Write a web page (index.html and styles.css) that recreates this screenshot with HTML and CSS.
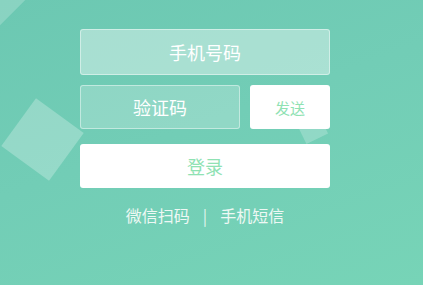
FILE: index.html
```html
<!DOCTYPE html>
<html lang="zh-CN">
<head>
<meta charset="utf-8">
<title>登录</title>
<link rel="stylesheet" href="styles.css">
</head>
<body>
<div class="stage">
  <div class="deco deco-corner"></div>
  <div class="deco deco-left"></div>
  <div class="deco deco-right"></div>
  <form class="login">
    <input class="field field-phone" type="text" placeholder="手机号码">
    <div class="code-row">
      <input class="field field-code" type="text" placeholder="验证码">
      <button type="button" class="btn btn-send">发送</button>
    </div>
    <button type="button" class="btn btn-login">登录</button>
    <div class="links">
      <a class="link">微信扫码</a>
      <span class="sep">|</span>
      <a class="link">手机短信</a>
    </div>
  </form>
</div>
</body>
</html>
```

FILE: styles.css
```css
html, body {
  margin: 0;
  padding: 0;
}
body {
  width: 423px;
  height: 285px;
  overflow: hidden;
  font-family: "Noto Sans CJK SC", "Noto Sans", sans-serif;
}
.stage {
  position: relative;
  width: 423px;
  height: 285px;
  overflow: hidden;
  background: linear-gradient(160deg, #6cc8b2 0%, #72cdb6 45%, #77d4b7 100%);
}
.deco {
  position: absolute;
  background: rgba(255, 255, 255, 0.26);
}
.deco-corner {
  width: 64px;
  height: 64px;
  left: -42px;
  top: -42px;
  transform: rotate(45deg);
  background: rgba(255, 255, 255, 0.2);
}
.deco-left {
  width: 59px;
  height: 59px;
  left: 13px;
  top: 110px;
  transform: rotate(36deg);
}
.deco-right {
  width: 24px;
  height: 24px;
  left: 300px;
  top: 116px;
  transform: rotate(-26deg);
  background: rgba(255, 255, 255, 0.22);
}
.login {
  position: relative;
  width: 250px;
  margin: 0 0 0 80px;
  padding-top: 29px;
  display: flex;
  flex-direction: column;
}
.field {
  box-sizing: border-box;
  border: 1px solid rgba(255, 255, 255, 0.45);
  border-radius: 3px;
  color: #fff;
  font-family: inherit;
  font-size: 18px;
  text-align: center;
  outline: none;
  padding: 0;
}
.field::placeholder {
  color: #fff;
  opacity: 1;
}
.field-phone {
  width: 250px;
  height: 46px;
  background: rgba(255, 255, 255, 0.4);
}
.code-row {
  display: flex;
  gap: 10px;
  margin-top: 10px;
}
.field-code {
  width: 160px;
  height: 44px;
  background: rgba(255, 255, 255, 0.22);
}
.btn {
  box-sizing: border-box;
  border: none;
  border-radius: 3px;
  background: #fff;
  color: #8fe2b3;
  font-family: inherit;
  padding: 0;
  cursor: pointer;
}
.btn-send {
  width: 80px;
  height: 44px;
  font-size: 15px;
}
.btn-login {
  width: 250px;
  height: 44px;
  margin-top: 15px;
  font-size: 18px;
}
.links {
  display: flex;
  justify-content: center;
  align-items: center;
  margin-top: 16px;
  font-size: 16px;
  line-height: 22px;
  color: #eef8f4;
}
.link {
  color: #eef8f4;
}
.sep {
  margin: 0 13px;
  color: rgba(255, 255, 255, 0.8);
}
```
